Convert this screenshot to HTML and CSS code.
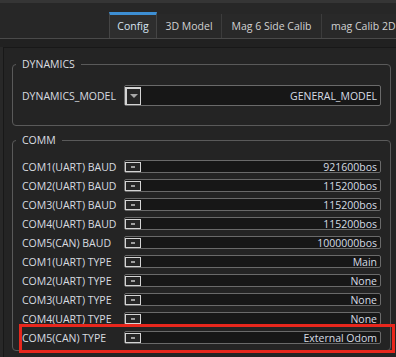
FILE: index.html
```html
<!DOCTYPE html>
<html lang="en">
<head>
	<meta charset="UTF-8">
	<title>Config</title>
	<link rel="stylesheet" href="styles.css">
</head>
<body>
	<div class="top"></div>
	<div class="tabbar">
		<div class="tab active w1">Config</div>
		<div class="tab w2">3D Model</div>
		<div class="tab w3">Mag 6 Side Calib</div>
		<div class="tab w4">mag Calib 2D</div>
	</div>
	<div class="gap"></div>
	<div class="panel">
		<fieldset class="group dyn">
			<legend>DYNAMICS</legend>
			<div class="row big">
				<span class="label">DYNAMICS_MODEL</span>
				<div class="combo">
					<span class="btn"><i class="tri"></i></span>
					<span class="val">GENERAL_MODEL</span>
				</div>
			</div>
		</fieldset>
		<fieldset class="group comm">
			<legend>COMM</legend>
			<div class="row"><span class="label">COM1(UART) BAUD</span><div class="combo"><span class="btn"><i class="dash"></i></span><span class="val">921600bos</span></div></div>
			<div class="row"><span class="label">COM2(UART) BAUD</span><div class="combo"><span class="btn"><i class="dash"></i></span><span class="val">115200bos</span></div></div>
			<div class="row"><span class="label">COM3(UART) BAUD</span><div class="combo"><span class="btn"><i class="dash"></i></span><span class="val">115200bos</span></div></div>
			<div class="row"><span class="label">COM4(UART) BAUD</span><div class="combo"><span class="btn"><i class="dash"></i></span><span class="val">115200bos</span></div></div>
			<div class="row"><span class="label">COM5(CAN) BAUD</span><div class="combo"><span class="btn"><i class="dash"></i></span><span class="val">1000000bos</span></div></div>
			<div class="row"><span class="label">COM1(UART) TYPE</span><div class="combo"><span class="btn"><i class="dash"></i></span><span class="val">Main</span></div></div>
			<div class="row"><span class="label">COM2(UART) TYPE</span><div class="combo"><span class="btn"><i class="dash"></i></span><span class="val">None</span></div></div>
			<div class="row"><span class="label">COM3(UART) TYPE</span><div class="combo"><span class="btn"><i class="dash"></i></span><span class="val">None</span></div></div>
			<div class="row"><span class="label">COM4(UART) TYPE</span><div class="combo"><span class="btn"><i class="dash"></i></span><span class="val">None</span></div></div>
			<div class="row"><span class="label">COM5(CAN) TYPE</span><div class="combo"><span class="btn"><i class="dash"></i></span><span class="val">External Odom</span></div></div>
		</fieldset>
	</div>
	<div class="highlight"></div>
</body>
</html>
```

FILE: styles.css
```css
*{
	margin: 0;
	padding: 0;
	box-sizing: border-box;
}
body{
	position: relative;
	width: 396px;
	height: 357px;
	overflow: hidden;
	background: #282828;
	font-family: "Open Sans", "Noto Sans", sans-serif;
	font-size: 10.5px;
	color: #d8dce0;
}
.top{
	height: 3px;
	background: #353535;
}
.tabbar{
	display: flex;
	align-items: flex-end;
	height: 36px;
	padding-left: 109px;
	background: #272727;
	border-bottom: 1px solid #4a4a4a;
}
.tab{
	height: 24px;
	line-height: 24px;
	text-align: center;
	white-space: nowrap;
	color: #d2d2d2;
	border-right: 1px solid #3c3c3c;
	background: #292929;
}
.tab.active{
	height: 26px;
	line-height: 22px;
	border-top: 3px solid #3d8fd4;
	border-left: 1px solid #454545;
	border-right: 1px solid #454545;
	background: #2e2e2e;
	color: #d6e4f2;
}
.w1{ width: 48px; }
.w2{ width: 65px; }
.w3{ width: 100px; }
.w4{ flex: 1; overflow: hidden; text-align: left; padding-left: 9px; border-right: none; }
.gap{
	height: 8px;
	background: #212121;
}
.panel{
	height: 310px;
	margin-left: 3px;
	padding-top: 9px;
	border-top: 1px solid #181818;
	border-left: 1px solid #181818;
	background: #242424;
}
.group{
	margin: 0 5px 0 8px;
	border: 1px solid #5a5a5a;
	border-radius: 4px;
	padding: 14px 9px 19px;
}
.group legend{
	margin-left: -6px;
	padding: 0 6px;
	line-height: 14px;
	color: #dcdfe2;
}
.comm{
	margin-top: 7px;
	padding: 10px 9px 3px;
}
.row{
	display: flex;
	align-items: center;
	height: 19px;
}
.row.big{
	height: 21px;
}
.label{
	width: 102px;
	flex: none;
	white-space: nowrap;
}
.combo{
	flex: 1;
	display: flex;
	align-items: center;
	height: 13px;
	border: 1px solid #6a6a6a;
	border-radius: 2px;
	background: #171717;
}
.big .combo{
	height: 21px;
}
.btn{
	display: flex;
	align-items: center;
	justify-content: center;
	width: 16px;
	height: 10px;
	border: 1px solid #d4d4d4;
	background: #262626;
}
.big .btn{
	height: 18px;
	border-width: 2px 1px 1px 2px;
}
.dash{
	width: 4px;
	height: 2px;
	background: #a0a0a0;
}
.tri{
	width: 0;
	height: 0;
	border-left: 4px solid transparent;
	border-right: 4px solid transparent;
	border-top: 4px solid #a8a8a8;
}
.val{
	margin-left: auto;
	padding-right: 3px;
	white-space: nowrap;
	line-height: 12px;
	color: #d6dce4;
}
.highlight{
	position: absolute;
	left: 19px;
	top: 324px;
	width: 376px;
	height: 29px;
	border: 3px solid #e8271d;
}
```
